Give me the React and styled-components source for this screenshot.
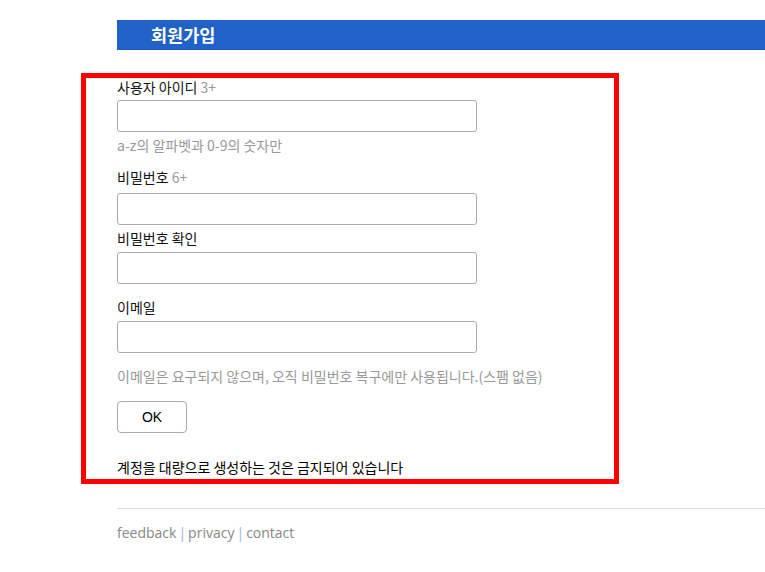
import React from "react";
import styled, { createGlobalStyle } from "styled-components";

const GlobalStyle = createGlobalStyle`
  html, body {
    margin: 0;
    padding: 0;
    background: #fff;
  }
  body {
    font-family: "Noto Sans CJK KR", "Noto Sans", sans-serif;
    color: #111;
  }
`;

const Page = styled.div`
  width: 765px;
  padding-top: 20px;
`;

const TitleBar = styled.div`
  margin-left: 117px;
  height: 30px;
  background: #2162c8;
  color: #fff;
  font-size: 17.5px;
  font-weight: 700;
  line-height: 30px;
  padding-left: 34px;
`;

const Outline = styled.form`
  box-sizing: border-box;
  margin: 23px 0 0 81px;
  width: 538px;
  border: 5px solid #ff0000;
  padding: 0 0 1px 31px;
`;

const Label = styled.div`
  font-size: 14px;
  line-height: 19px;
  margin-top: ${(p) => p.$mt || 0}px;
  margin-bottom: ${(p) => p.$mb || 0}px;
  color: #111;
`;

const Muted = styled.span`
  color: #999;
`;

const Input = styled.input`
  display: block;
  box-sizing: border-box;
  width: 360px;
  height: 32px;
  margin: 0;
  border: 1px solid #aaa;
  border-radius: 3px;
  background: #fff;
  outline: none;
`;

const Hint = styled.div`
  font-size: 14px;
  line-height: 18px;
  color: #999;
  margin-top: ${(p) => p.$mt || 0}px;
`;

const Button = styled.button`
  display: block;
  margin-top: 16px;
  width: 70px;
  height: 32px;
  background: #fff;
  border: 1px solid #aaa;
  border-radius: 4px;
  font-family: "Liberation Sans", Arial, sans-serif;
  font-size: 14px;
  color: #000;
`;

const Notice = styled.div`
  margin-top: 24px;
  font-size: 14px;
  line-height: 21px;
  color: #000;
`;

const Rule = styled.hr`
  margin: 24px 0 0 117px;
  border: 0;
  border-top: 1px solid #ddd;
  height: 0;
`;

const Footer = styled.div`
  margin: 14px 0 0 117px;
  font-family: "Open Sans", "Noto Sans", sans-serif;
  font-size: 14px;
  line-height: 20px;
  color: #888;
`;

const Sep = styled.span`
  color: #9bb6d6;
  margin: 0 2px;
`;

export default function App() {
  return (
    <>
      <GlobalStyle />
      <Page>
        <TitleBar>회원가입</TitleBar>
        <Outline onSubmit={(e) => e.preventDefault()}>
          <Label $mb={3}>
            사용자 아이디 <Muted>3+</Muted>
          </Label>
          <Input type="text" />
          <Hint $mt={4}>a-z의 알파벳과 0-9의 숫자만</Hint>

          <Label $mt={14} $mb={6}>
            비밀번호 <Muted>6+</Muted>
          </Label>
          <Input type="password" />

          <Label $mt={4} $mb={4}>
            비밀번호 확인
          </Label>
          <Input type="password" />

          <Label $mt={14} $mb={4}>
            이메일
          </Label>
          <Input type="email" />
          <Hint $mt={14}>
            이메일은 요구되지 않으며, 오직 비밀번호 복구에만 사용됩니다.(스팸 없음)
          </Hint>

          <Button type="submit">OK</Button>

          <Notice>계정을 대량으로 생성하는 것은 금지되어 있습니다</Notice>
        </Outline>
        <Rule />
        <Footer>
          feedback<Sep>|</Sep>privacy<Sep>|</Sep>contact
        </Footer>
      </Page>
    </>
  );
}
